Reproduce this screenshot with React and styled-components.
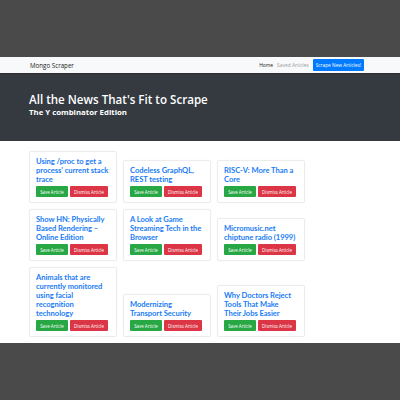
import styled, { createGlobalStyle } from 'styled-components';

const GlobalStyle = createGlobalStyle`
  html, body {
    margin: 0;
    padding: 0;
    background: #4a4a4a;
  }
  * {
    box-sizing: border-box;
  }
`;

const Frame = styled.div`
  width: 400px;
  height: 400px;
  display: flex;
  flex-direction: column;
  background: #4a4a4a;
`;

const Band = styled.div`
  height: ${(p) => p.h}px;
  flex-shrink: 0;
`;

const Site = styled.div`
  height: 286px;
  flex-shrink: 0;
  background: #fff;
  overflow: hidden;
  display: flex;
  flex-direction: column;
  font-family: 'Open Sans', 'Noto Sans', sans-serif;
`;

const Navbar = styled.nav`
  height: 17px;
  flex-shrink: 0;
  background: #f8f9fa;
  border-bottom: 1px solid #2a2e33;
  display: flex;
  align-items: center;
  justify-content: space-between;
  padding: 0 36px 0 30px;
`;

const Brand = styled.span`
  font-size: 6.2px;
  color: #222;
`;

const NavLinks = styled.div`
  display: flex;
  align-items: center;
  gap: 4px;
`;

const NavLink = styled.span`
  font-size: 4.9px;
  color: ${(p) => (p.active ? '#222' : '#9a9a9a')};
`;

const ScrapeButton = styled.button`
  height: 12px;
  padding: 0 3px;
  border: none;
  border-radius: 1px;
  background: #007bff;
  color: #fff;
  font-family: inherit;
  font-size: 4.8px;
`;

const Jumbotron = styled.header`
  height: 67px;
  flex-shrink: 0;
  background: #343a40;
  padding: 18px 0 0 29px;
  color: #fff;
`;

const Heading = styled.h1`
  margin: 0;
  font-size: 11.6px;
  font-weight: 600;
  line-height: 15px;
`;

const SubHeading = styled.h2`
  margin: 0;
  font-size: 7.8px;
  font-weight: 700;
  line-height: 10px;
`;

const CardGrid = styled.div`
  width: 305px;
  display: flex;
  flex-wrap: wrap;
  align-items: flex-end;
  gap: 6px;
  padding: 10px 0 0 29px;
`;

const Card = styled.div`
  width: 88px;
  border: 1px solid #ececec;
  border-radius: 2px;
  box-shadow: 0 0 2px rgba(0, 0, 0, 0.04);
  padding: 5px 7px 5px 6px;
`;

const Title = styled.a`
  display: block;
  color: #1a7cf5;
  font-family: Lato, 'Open Sans', sans-serif;
  font-size: 7.6px;
  font-weight: 700;
  letter-spacing: -0.05px;
  line-height: 9px;
  margin-bottom: 2px;
`;

const Actions = styled.div`
  display: flex;
  gap: 2px;
`;

const ActionButton = styled.button`
  height: 11px;
  padding: 0;
  flex-shrink: 0;
  width: ${(p) => p.w}px;
  border: none;
  border-radius: 1px;
  background: ${(p) => (p.variant === 'save' ? '#28a745' : '#dc3545')};
  color: #fff;
  font-family: inherit;
  font-size: 4.4px;
`;

const articles = [
  'Using /proc to get a process\' current stack trace',
  'Codeless GraphQL, REST testing',
  'RISC-V: More Than a Core',
  'Show HN: Physically Based Rendering – Online Edition',
  'A Look at Game Streaming Tech in the Browser',
  'Micromusic.net chiptune radio (1999)',
  'Animals that are currently monitored using facial recognition technology',
  'Modernizing Transport Security',
  'Why Doctors Reject Tools That Make Their Jobs Easier',
];

export default function App() {
  return (
    <>
      <GlobalStyle />
      <Frame>
        <Band h={57} />
        <Site>
          <Navbar>
            <Brand>Mongo Scraper</Brand>
            <NavLinks>
              <NavLink active>Home</NavLink>
              <NavLink>Saved Articles</NavLink>
              <ScrapeButton>Scrape New Articles!</ScrapeButton>
            </NavLinks>
          </Navbar>
          <Jumbotron>
            <Heading>All the News That's Fit to Scrape</Heading>
            <SubHeading>The Y combinator Edition</SubHeading>
          </Jumbotron>
          <CardGrid>
            {articles.map((title) => (
              <Card key={title}>
                <Title>{title}</Title>
                <Actions>
                  <ActionButton variant="save" w={32}>
                    Save Article
                  </ActionButton>
                  <ActionButton variant="dismiss" w={38}>
                    Dismiss Article
                  </ActionButton>
                </Actions>
              </Card>
            ))}
          </CardGrid>
        </Site>
        <Band h={57} />
      </Frame>
    </>
  );
}
